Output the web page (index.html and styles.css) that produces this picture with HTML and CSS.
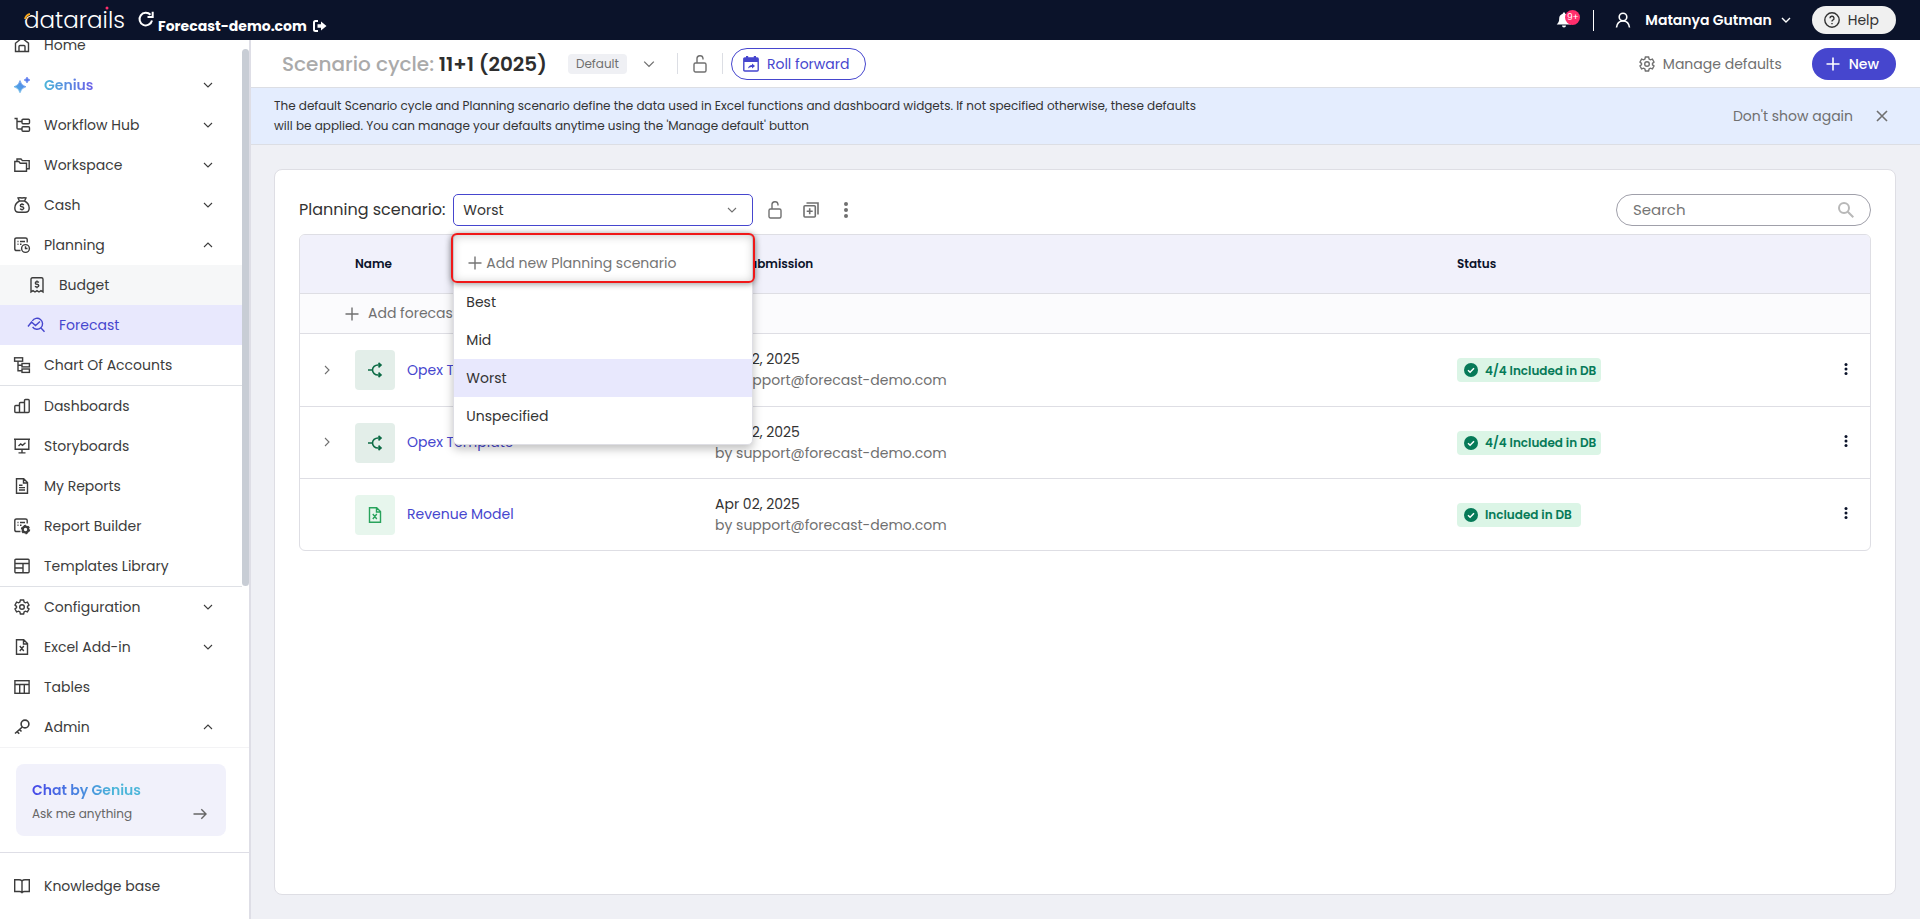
FILE: index.html
```html
<!DOCTYPE html>
<html lang="en">
<head>
<meta charset="utf-8">
<title>Scenario cycle: 11+1 (2025)</title>
<link rel="stylesheet" href="styles.css">
</head>
<body>
<svg class="sprite" aria-hidden="true">
  <defs>
    <linearGradient id="spark" x1="0" y1="1" x2="1" y2="0"><stop offset="0" stop-color="#4bb5e0"/><stop offset="1" stop-color="#5a6cf0"/></linearGradient>
    <symbol id="down" viewBox="0 0 10 10"><path d="M1 3l4 4 4-4"/></symbol>
    <symbol id="up" viewBox="0 0 10 10"><path d="M1 7l4-4 4 4"/></symbol>
    <symbol id="right" viewBox="0 0 10 10"><path d="M3 1l4 4-4 4"/></symbol>
    <symbol id="plus" viewBox="0 0 14 14"><path d="M7 .5v13M.5 7h13"/></symbol>
    <symbol id="dots" viewBox="0 0 4 16"><g fill="currentColor" stroke="none"><circle cx="2" cy="2" r="2"/><circle cx="2" cy="8" r="2"/><circle cx="2" cy="14" r="2"/></g></symbol>
    <symbol id="dots-small" viewBox="0 0 4 12"><g fill="currentColor" stroke="none"><circle cx="2" cy="1.500" r="1.500"/><circle cx="2" cy="6" r="1.500"/><circle cx="2" cy="10.500" r="1.500"/></g></symbol>
    <symbol id="lock" viewBox="0 0 14 18"><rect x="1" y="8" width="12" height="9" rx="1.500"/><path d="M4 8V4a3 3 0 0 1 6-.5v1"/></symbol>
    <symbol id="gear" viewBox="0 0 16 16"><path d="M6.400 1h3.200l.5 2 1.300.8 2-.6L15 6l-1.500 1.400v1.400L15 10l-1.600 2.800-2-.6-1.300.8-.5 2H6.400l-.5-2-1.300-.8-2 .6L1 10l1.500-1.300V7.400L1 6l1.600-2.800 2 .6 1.300-.8z"/><circle cx="8" cy="8" r="2.300"/></symbol>
    <symbol id="split" viewBox="0 0 16 16"><path d="M1 8h4.500M13.500 3H11a5.500 5 0 0 0 0 10h2.500M11.500.8L14 3l-2.500 2.300M11.500 10.700L14 13l-2.500 2.200"/></symbol>
    <symbol id="sheet" viewBox="0 0 16 16"><path d="M2.500.8h7.200l3.800 3.800v10.600h-11zM9.500.8V5h4M5.800 7l4 5M9.800 7l-4 5"/></symbol>
    <symbol id="check" viewBox="0 0 14 14"><circle cx="7" cy="7" r="7" fill="currentColor" stroke="none"/><path d="M4 7.300l2.100 2L10 5.300" stroke="#fff" stroke-width="1.500"/></symbol>
  </defs>
</svg>

<header class="topbar">
  <svg class="logo" viewBox="0 0 102 26" role="img" aria-label="datarails">
    <text x="0" y="23" class="logo-text">datarails</text>
    <path d="M0 14a7 7 0 0 1 6-5" class="logo-cover"/>
    <path d="M1 14a7 7 0 0 1 5-5" class="logo-arc"/>
    <circle cx="83" cy="3" r="1.500" class="logo-dot"/>
  </svg>
  <button class="icon-btn refresh" aria-label="Refresh"><svg class="i16 bold" viewBox="0 0 16 16"><path d="M14 9.500A6.300 6.300 0 1 1 12.500 3.800M14.700.8V6H9.500"/></svg></button>
  <a class="tenant" href="#">Forecast-demo.com
    <svg class="logout bold" viewBox="0 0 14 12"><path d="M5 1H2.500Q1 1 1 2.500v7Q1 11 2.500 11H5"/><path d="M4.500 4.300H8V1.500L13.500 6 8 10.500V7.700H4.500z" fill="currentColor" stroke="none"/></svg></a>
  <div class="top-right">
    <button class="icon-btn bell" aria-label="Notifications"><svg class="i16" viewBox="0 0 16 16"><path d="M8 .5c-.8 0-1.200.6-1.200 1.200C4.500 2.300 3.200 4 3.200 6.300c0 3.500-.8 4.500-2.500 6.200h14.600c-1.700-1.700-2.500-2.700-2.500-6.200 0-2.300-1.300-4-3.600-4.600C9.200 1.100 8.800.5 8 .5zM6 13.500a2 2 0 0 0 4 0z" fill="currentColor" stroke="none"/></svg><span class="badge">9+</span></button>
    <span class="top-rule"></span>
    <button class="user"><svg class="i16 thick" viewBox="0 0 16 16"><circle cx="8" cy="5" r="3.800"/><path d="M1.500 15.500c.5-4 3-6.500 6.500-6.500s6 2.500 6.500 6.500"/></svg><span>Matanya Gutman</span><svg class="i10"><use href="#down"/></svg></button>
    <button class="help"><svg class="i16" viewBox="0 0 16 16"><circle cx="8" cy="8" r="7.200"/><path d="M6 6.300a2 2 0 1 1 2.800 1.800Q8 8.500 8 9.600M8 11v1.200"/></svg>Help</button>
  </div>
</header>

<div class="shell">
  <aside class="sidebar">
    <div class="scroller">
      <nav class="nav">
        <a href="#" class="item"><svg class="i16" viewBox="0 0 16 16"><path d="M1.500 6.200L8 1l6.500 5.200v8.300h-13zM5 14.500v-5q0-1 1-1h4q1 0 1 1v5"/></svg>Home</a>
        <a href="#" class="item genius"><svg class="i16" viewBox="0 0 16 16"><path d="M6 3.500Q7 8.500 12 9.800 7 11 6 15.800 5 11 0 9.800 5 8.500 6 3.500zM13 0q.5 2.300 3 3-2.500.6-3 3-.5-2.400-3-3 2.500-.7 3-3z" fill="url(#spark)" stroke="url(#spark)" stroke-width=".6"/></svg><span>Genius</span><svg class="i10 chev"><use href="#down"/></svg></a>
        <a href="#" class="item"><svg class="i16" viewBox="0 0 16 16"><path d="M.5 1.500H3v9.500q0 1 1 1h4M3 4.500h5"/><rect x="8" y="2.200" width="7.500" height="4.500" rx="1"/><rect x="8" y="9.700" width="7.500" height="4.500" rx="1"/></svg>Workflow Hub<svg class="i10 chev"><use href="#down"/></svg></a>
        <a href="#" class="item"><svg class="i16" viewBox="0 0 16 16"><path d="M.8 4.500h4l1.400 1.700h6.300v8H.8zM3 4.500V2h4l1.400 1.600h6.800v8.200h-2.700"/></svg>Workspace<svg class="i10 chev"><use href="#down"/></svg></a>
        <a href="#" class="item"><svg class="i16" viewBox="0 0 16 16"><path d="M5.500 4L4 1q2-.6 4 0 2-.6 4 0l-1.500 3zM5.500 4C2.500 5.500.8 8 .8 11c0 3 2 4.300 4 4.300h6.400c2 0 4-1.300 4-4.300 0-3-1.700-5.500-4.700-7M9.800 8q-.6-.8-1.800-.8-1.700 0-1.700 1.200T8 9.800q1.800.3 1.800 1.400T8 12.500q-1.300 0-1.900-.9M8 6.200v1M8 12.500v1"/></svg>Cash<svg class="i10 chev"><use href="#down"/></svg></a>
        <a href="#" class="item"><svg class="i16" viewBox="0 0 16 16"><path d="M6.500 13.500h-4Q.8 13.500.8 12V2.500Q.8 1 2.500 1h9q1.700 0 1.700 1.500v3M3.500 4.500h1M6 4.500h5M3.500 7.300h1M6 7.300h1.500"/><circle cx="11.500" cy="11.500" r="3.900"/><path d="M11.500 9.300v2.200h2"/></svg>Planning<svg class="i10 chev"><use href="#up"/></svg></a>
        <a href="#" class="item sub shaded"><svg class="i16" viewBox="0 0 16 16"><path d="M2 15V2.300Q2 .8 3.500.8h9Q14 .8 14 2.300V15l-2-1.400-2 1.400-2-1.400L6 15l-2-1.400zM9.800 5.500Q9.200 4.700 8 4.700q-1.700 0-1.700 1.200T8 7.300q1.800.3 1.800 1.400T8 10q-1.300 0-1.900-.9M8 3.500v1.200M8 10v1.200"/></svg>Budget</a>
        <a href="#" class="item sub active"><svg class="i16" viewBox="0 0 16 16"><path d="M-1 9.500L2.500 5 6.500 8.500 11 4.500M3.300 4a5.500 5.500 0 1 1 .3 6M12 11l3.500 3.800"/></svg>Forecast</a>
        <a href="#" class="item"><svg class="i16" viewBox="0 0 16 16"><rect x=".6" y=".8" width="8" height="3.400"/><rect x="8" y="6.500" width="7.400" height="3.400"/><rect x="8" y="12" width="7.400" height="3.400"/><path d="M4 4.200v9.500h4M4 8.200h4"/></svg>Chart Of Accounts</a>
        <hr class="rule">
        <a href="#" class="item"><svg class="i16" viewBox="0 0 16 16"><path d="M.8 8.500q0-1 1-1H5.500v7H1.800q-1 0-1-1zM5.500 14.500v-9q0-1 1-1h4v10zM10.500 14.500v-12q0-1 1-1h2.700q1 0 1 1v11q0 1-1 1z"/></svg>Dashboards</a>
        <a href="#" class="item"><svg class="i16" viewBox="0 0 16 16"><path d="M0 1.200h16M1.200 1.200v10h13.600v-10M8 11.200v3.600M4.500 14.900h7M4.500 8l2.200-2 1.800 1.400 3-2.600"/></svg>Storyboards</a>
        <a href="#" class="item"><svg class="i16" viewBox="0 0 16 16"><path d="M2.500.8h7.200l3.800 3.800v10.600h-11zM9.500.8V5h4M5 7.300h3.500M5 9.600h6M5 12h6"/></svg>My Reports</a>
        <a href="#" class="item"><svg class="i16" viewBox="0 0 16 16"><path d="M6.500 13.500h-4Q.8 13.500.8 12V2.500Q.8 1 2.500 1h9q1.700 0 1.700 1.500v3M3.500 4.500h1M6 4.500h5M3.500 7.300h1M6 7.300h1.500"/><circle cx="11.500" cy="11.500" r="2.800" stroke-width="2.200"/><circle cx="11.500" cy="11.500" r="4" stroke-dasharray="2 2.190"/></svg>Report Builder</a>
        <a href="#" class="item"><svg class="i16" viewBox="0 0 16 16"><rect x=".9" y="1.200" width="14.200" height="13.600" rx="1"/><path d="M1 5.500h14M9 5.500v9.300M1 10h8"/></svg>Templates Library</a>
        <hr class="rule">
        <a href="#" class="item"><svg class="i16"><use href="#gear"/></svg>Configuration<svg class="i10 chev"><use href="#down"/></svg></a>
        <a href="#" class="item"><svg class="i16"><use href="#sheet"/></svg>Excel Add-in<svg class="i10 chev"><use href="#down"/></svg></a>
        <a href="#" class="item"><svg class="i16" viewBox="0 0 16 16"><rect x=".9" y="1.700" width="14.200" height="12.600"/><path d="M1 5.500h14M5.700 5.500v8.800M10.300 5.500v8.800"/></svg>Tables</a>
        <a href="#" class="item"><svg class="i16 thick" viewBox="0 0 16 16"><circle cx="11" cy="5" r="3.900"/><path d="M8.300 8L1 14.500M3 12.500l2.200 2.300M5.500 10.500l2 2"/></svg>Admin<svg class="i10 chev"><use href="#up"/></svg></a>
      </nav>
      <div class="track"><div class="thumb"></div></div>
    </div>
    <a href="#" class="chat"><span class="chat-title">Chat by Genius</span><span class="chat-sub">Ask me anything<svg class="i14" viewBox="0 0 14 14"><path d="M.5 7h12.500M8.300 2.300L13 7l-4.700 4.700"/></svg></span></a>
    <div class="kb"><a href="#" class="item"><svg class="i16" viewBox="0 0 16 16"><path d="M8 3Q7 1.800 5 1.800H.7v11.700H5.500Q7.300 13.500 8 14.500q.7-1 2.500-1h4.800V1.800H11Q9 1.800 8 3v11"/></svg>Knowledge base</a></div>
  </aside>

  <main class="main">
    <div class="page-head">
      <h1 class="title"><span class="muted">Scenario cycle:</span> 11+1 (2025)</h1>
      <span class="tag">Default</span>
      <button class="icon-btn cycle-open" aria-label="Choose cycle"><svg class="i12"><use href="#down"/></svg></button>
      <button class="icon-btn cycle-lock" aria-label="Lock cycle"><svg class="lock"><use href="#lock"/></svg></button>
      <button class="roll"><svg class="i16" viewBox="0 0 16 16"><path d="M.8 3q0-1 1-1h12.400q1 0 1 1v11q0 1-1 1H1.800q-1 0-1-1z"/><path d="M1 2h14v4H1zM3 0h2.200v3H3zM10.800 0H13v3h-2.200zM9 7.500l3 2.500-3 2.500v-1.500q-2.500-.2-4 1.500.6-3.200 4-3.500z" fill="currentColor" stroke="none"/></svg>Roll forward</button>
      <button class="manage"><svg class="i16"><use href="#gear"/></svg>Manage defaults</button>
      <button class="new"><svg class="i14 thick"><use href="#plus"/></svg>New</button>
    </div>
    <section class="banner">
      <p class="banner-text">The default Scenario cycle and Planning scenario define the data used in Excel functions and dashboard widgets. If not specified otherwise, these defaults<br>will be applied. You can manage your defaults anytime using the 'Manage default' button</p>
      <button class="plain">Don't show again</button>
      <button class="icon-btn" aria-label="Close"><svg class="i12 thick" viewBox="0 0 12 12"><path d="M1 1l10 10M11 1L1 11"/></svg></button>
    </section>
    <section class="card">
      <div class="toolbar">
        <label class="label" for="scenario">Planning scenario:</label>
        <div class="select-box">
          <select id="scenario" class="select"><option>Best</option><option>Mid</option><option selected>Worst</option><option>Unspecified</option></select>
          <svg class="i10 select-chev"><use href="#down"/></svg>
          <div class="menu">
            <button class="menu-add"><svg class="i14"><use href="#plus"/></svg>Add new Planning scenario</button>
            <ul class="menu-list">
              <li class="opt">Best</li>
              <li class="opt">Mid</li>
              <li class="opt chosen">Worst</li>
              <li class="opt">Unspecified</li>
            </ul>
          </div>
        </div>
        <button class="icon-btn tool" aria-label="Lock scenario"><svg class="lock"><use href="#lock"/></svg></button>
        <button class="icon-btn tool" aria-label="Duplicate scenario"><svg class="i16 thick" viewBox="0 0 16 16"><rect x="1" y="3.700" width="11.300" height="11.300" rx="1"/><path d="M3.500 1h11.500v11.500M6.700 6.300v6M3.700 9.300h6"/></svg></button>
        <button class="icon-btn tool" aria-label="More"><svg class="dots"><use href="#dots"/></svg></button>
        <div class="search"><input type="search" class="search-input" placeholder="Search" aria-label="Search"><svg class="i16 glass" viewBox="0 0 16 16"><circle cx="6" cy="6" r="5"/><path d="M9.800 9.800l5.500 5.500"/></svg></div>
      </div>
      <div class="table-frame">
        <table class="table">
          <colgroup><col class="c-open"><col class="c-name"><col><col class="c-status"><col class="c-act"></colgroup>
          <thead><tr><th></th><th>Name</th><th>Last submission</th><th>Status</th><th></th></tr></thead>
          <tbody>
            <tr class="add-row"><td colspan="5"><button class="add"><svg class="i14"><use href="#plus"/></svg>Add forecast</button></td></tr>
            <tr><td class="open"><button class="icon-btn" aria-label="Expand"><svg class="i10"><use href="#right"/></svg></button></td><td><a class="file" href="#"><span class="tile"><svg class="i16 thick"><use href="#split"/></svg></span>Opex Template</a></td><td>Apr 02, 2025<br><span class="by">by support@forecast-demo.com</span></td><td><span class="pill"><svg class="i14"><use href="#check"/></svg>4/4 Included in DB</span></td><td class="act"><button class="icon-btn" aria-label="Row actions"><svg class="dots small"><use href="#dots-small"/></svg></button></td></tr>
            <tr><td class="open"><button class="icon-btn" aria-label="Expand"><svg class="i10"><use href="#right"/></svg></button></td><td><a class="file" href="#"><span class="tile"><svg class="i16 thick"><use href="#split"/></svg></span>Opex Template</a></td><td>Apr 02, 2025<br><span class="by">by support@forecast-demo.com</span></td><td><span class="pill"><svg class="i14"><use href="#check"/></svg>4/4 Included in DB</span></td><td class="act"><button class="icon-btn" aria-label="Row actions"><svg class="dots small"><use href="#dots-small"/></svg></button></td></tr>
            <tr><td></td><td><a class="file" href="#"><span class="tile excel"><svg class="i16"><use href="#sheet"/></svg></span>Revenue Model</a></td><td>Apr 02, 2025<br><span class="by">by support@forecast-demo.com</span></td><td><span class="pill roomy"><svg class="i14"><use href="#check"/></svg>Included in DB</span></td><td class="act"><button class="icon-btn" aria-label="Row actions"><svg class="dots small"><use href="#dots-small"/></svg></button></td></tr>
          </tbody>
        </table>
      </div>
    </section>
  </main>
</div>
</body>
</html>
```

FILE: styles.css
```css
* { box-sizing: border-box; }
body {
  margin: 0;
  height: 100vh;
  display: flex;
  flex-direction: column;
  overflow: hidden;
  background: #eff0f5;
  color: #333;
  font: 14px/20px Poppins, Inter, "Liberation Sans", sans-serif;
}
a { color: inherit; text-decoration: none; }
button { margin: 0; padding: 0; border: 0; background: none; color: inherit; font: inherit; display: inline-flex; align-items: center; cursor: pointer; }
svg { flex: none; fill: none; stroke: currentColor; stroke-width: 1.4; display: block; }
.sprite { position: absolute; width: 0; height: 0; }
.thick { stroke-width: 1.6; }
.bold { stroke-width: 2; }
.i10 { width: 10px; height: 10px; stroke-width: 1.1; }
.i12 { width: 12px; height: 12px; }
.i14 { width: 14px; height: 14px; }
.i16 { width: 16px; height: 16px; overflow: visible; }
.lock { width: 14px; height: 18px; }
.dots { width: 4px; height: 16px; }
.dots.small { height: 12px; }

.topbar { flex: none; height: 40px; display: flex; align-items: center; padding: 0 24px; background: #0b132a; color: #fff; }
.logo { width: 102px; height: 26px; margin-bottom: 4px; overflow: visible; }
.logo-text { font: 300 23px Poppins, sans-serif; fill: #fff; stroke: none; }
.logo-cover { stroke: #0b132a; stroke-width: 4; }
.logo-arc { stroke: #f9a61a; stroke-width: 2; }
.logo-dot { fill: #ff2e6c; stroke: none; }
.refresh { margin: 0 4px 2px 12px; }
.tenant { display: flex; align-items: center; gap: 6px; padding-top: 12px; font-weight: 700; }
.logout { width: 14px; height: 12px; }
.top-right { margin-left: auto; display: flex; align-items: center; }
.bell { position: relative; margin-right: 21px; }
.badge { position: absolute; left: 9px; top: -2px; width: 15px; height: 15px; border-radius: 8px; background: #ff2e6c; font-size: 9px; line-height: 15px; text-align: center; }
.top-rule { width: 1px; height: 21px; margin-right: 21px; background: #fff; }
.user { gap: 9px; margin-right: 21px; font-weight: 600; }
.user .i16 { margin-right: 5px; }
.user .i10 { stroke-width: 1.4; }
.help { height: 28px; padding: 0 17px 0 12px; gap: 8px; border-radius: 14px; background: #f0f0f0; color: #333; }

.shell { flex: 1; min-height: 0; display: flex; }
.sidebar { flex: none; width: 251px; display: flex; flex-direction: column; background: #fff; border-right: 2px solid #dedee6; }
.scroller { flex: 1; min-height: 0; display: flex; overflow: hidden; border-bottom: 1px solid #f3f3f5; }
.nav { flex: 1; margin-top: -15px; }
.track { width: 7px; padding-top: 9px; }
.thumb { height: 77%; border-radius: 4px; background: #c8cdd5; }
.item { display: flex; align-items: center; height: 40px; gap: 14px; padding: 0 29px 0 14px; color: #3c3c3c; }
.item .chev { margin-left: auto; }
.sub { padding-left: 29px; }
.shaded { background: #f6f7f8; }
.active { background: #e8e8fd; color: #4646ce; }
.genius { font-weight: 600; }
.genius span { background: linear-gradient(90deg, #4bb5d9, #6a5fe8); background-clip: text; color: transparent; }
.rule { margin: 0; border: 0; border-top: 1px solid #dfe1e6; }
.chat { display: flex; flex-direction: column; gap: 4px; height: 72px; margin: 16px 23px 16px 16px; padding: 16px; border-radius: 8px; background: #f1f1fb; }
.chat-title { align-self: flex-start; font-weight: 600; background: linear-gradient(90deg, #4646e8, #4bb5d9 75%); background-clip: text; color: transparent; }
.chat-sub { display: flex; align-items: center; justify-content: space-between; padding-right: 3px; font-size: 12px; color: #666; }
.kb { height: 67px; padding-top: 13px; border-top: 1px solid #dedee6; }

.main { flex: 1; min-width: 0; display: flex; flex-direction: column; }
.page-head { flex: none; height: 48px; display: flex; align-items: center; padding: 0 24px 0 31px; background: #fff; border-bottom: 1px solid #dcdee4; color: #707070; }
.title { margin: 0 21px 0 0; font-size: 20px; font-weight: 600; color: #2e2e2e; }
.muted { color: #aaa; font-weight: 500; }
.tag { padding: 0 8px; border-radius: 4px; background: #eff0f4; font-size: 12px; }
.cycle-open { margin: 0 22px 0 16px; }
.cycle-open svg { stroke-width: 1.1; }
.cycle-lock { height: 21px; margin-right: 8px; padding: 0 15px; border: 1px solid #dcdee4; border-width: 0 1px; }
.roll { height: 32px; padding: 0 16px 0 11px; gap: 8px; border: 1px solid #4646ce; border-radius: 16px; color: #4646ce; }
.manage { margin-left: auto; margin-right: 30px; gap: 8px; }
.new { height: 32px; padding: 0 17px 0 14px; gap: 9px; border-radius: 16px; background: #4646ce; color: #fff; font-weight: 500; }
.banner { flex: none; height: 57px; display: flex; align-items: center; padding: 0 32px 0 23px; background: #e4edfe; border-bottom: 1px solid #dcdee4; color: #707070; }
.banner-text { flex: 1; margin: 0; font-size: 12px; color: #333; }
.plain { margin-right: 23px; }
.card { flex: 1; min-height: 0; margin: 24px 24px 24px 23px; padding: 24px; background: #fff; border: 1px solid #dedee4; border-radius: 8px; }
.toolbar { display: flex; align-items: center; height: 32px; margin-bottom: 8px; color: #707070; }
.label { margin-right: 8px; font-size: 16px; color: #333; white-space: nowrap; }
.select-box { position: relative; width: 300px; height: 32px; margin-right: 15px; }
.select { width: 100%; height: 32px; padding: 0 32px 0 9px; border: 1px solid #4646ce; border-radius: 5px; background: #fff; color: #333; font: inherit; appearance: none; }
.select-chev { position: absolute; right: 16px; top: 11px; }
.menu { position: absolute; z-index: 2; top: 40px; left: 0; right: 0; padding-bottom: 9px; background: #fff; border: 1px solid #dedee4; border-radius: 5px; box-shadow: 0 4px 10px rgba(0, 0, 0, .25); }
.menu-add { width: 304px; height: 50px; margin: -2px -3px 0; padding: 10px 0 0 15px; gap: 4px; border: 2px solid #f01818; border-radius: 6px; box-shadow: 0 1px 6px rgba(0, 0, 0, .4), inset 0 1px 10px rgba(0, 0, 0, .2); color: #757575; }
.menu-list { margin: 0; padding: 0; list-style: none; }
.opt { height: 38px; padding: 0 12px; line-height: 38px; color: #333; }
.chosen { background: #e8e8fd; }
.tool { margin-right: 21px; }
.tool + .tool + .tool { margin-left: 4px; }
.search { position: relative; width: 255px; margin-left: auto; color: #b8b8b8; }
.search-input { width: 100%; height: 32px; padding: 0 48px 2px 16px; border: 1px solid #a0a0aa; border-radius: 16px; background: #fff; font: inherit; font-size: 15px; display: block; }
.search-input::placeholder { color: #757575; }
.glass { position: absolute; right: 17px; top: 8px; stroke-width: 2; }
.table-frame { overflow: hidden; border: 1px solid #dedee4; border-radius: 6px; }
.table { width: 100%; table-layout: fixed; border-collapse: separate; border-spacing: 0; }
.c-open { width: 55px; }
.c-name { width: 360px; }
.c-status { width: 365px; }
.c-act { width: 48px; }
th, td { padding: 0; text-align: left; border-bottom: 1px solid #dedee4; }
th { height: 59px; background: #f1f1fb; color: #0b132a; font-size: 12px; font-weight: 600; }
td { height: 72px; line-height: 21px; }
.add-row td { height: 40px; background: #fbfbfd; }
.add-row + tr td { height: 73px; }
tbody tr:last-child td { height: 71px; border-bottom: 0; }
.add { height: 38px; margin-left: 45px; gap: 9px; color: #707070; vertical-align: middle; }
.open .icon-btn { margin-left: 22px; color: #707070; }
.file { display: flex; align-items: center; gap: 12px; color: #4646ce; }
.tile { width: 40px; height: 40px; display: flex; align-items: center; justify-content: center; border-radius: 4px; background: #e3eee9; color: #0c6b45; }
.excel { background: #e7f6ed; color: #28a35c; }
.by { color: #707070; }
.pill { display: inline-flex; align-items: center; gap: 7px; height: 24px; padding: 0 5px 0 7px; border-radius: 4px; background: #dbf5e6; color: #067a58; font-size: 12px; font-weight: 600; vertical-align: middle; }
.roomy { padding-right: 9px; }
.act { color: #0b132a; }
.act .icon-btn { margin-left: 22px; }
```
